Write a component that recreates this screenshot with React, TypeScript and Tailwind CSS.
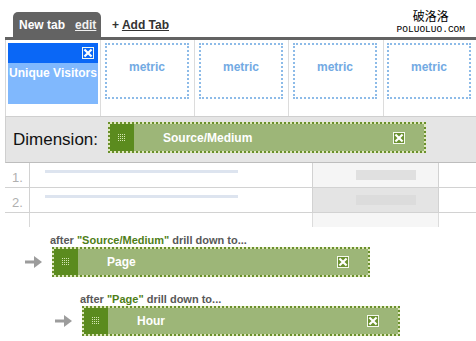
import React from "react";

const SANS = { fontFamily: '"Liberation Sans", Arial, sans-serif' };

function Grip() {
  const cells: React.ReactNode[] = [];
  for (let y = 0; y < 4; y++) {
    for (let x = 0; x < 4; x++) {
      cells.push(<rect key={`${x}-${y}`} x={x * 2} y={y * 2} width="1" height="1" fill="#d6e6b4" />);
    }
  }
  return (
    <svg width="8" height="8" viewBox="0 0 8 8">
      {cells}
    </svg>
  );
}

function XIcon({ fill }: { fill: string }) {
  return (
    <svg width="12" height="12" viewBox="0 0 12 12">
      <rect x="0.5" y="0.5" width="11" height="11" fill={fill} stroke="#f4f8ee" strokeWidth="1" />
      <path d="M3.2 3.2 L8.8 8.8 M8.8 3.2 L3.2 8.8" stroke="#ffffff" strokeWidth="2.2" strokeLinecap="square" />
    </svg>
  );
}

function Arrow() {
  return (
    <svg width="17" height="12" viewBox="0 0 17 12">
      <rect x="0" y="4.5" width="10" height="3" fill="#9c9c9c" />
      <polygon points="9,0 17,6 9,12" fill="#9c9c9c" />
    </svg>
  );
}

function PillBody({ label }: { label: string }) {
  return (
    <div className="h-full border-2 border-dotted border-[#6a902b] bg-clip-padding flex">
      <div className="w-[24px] bg-[#5b8b1e] flex items-center justify-center">
        <Grip />
      </div>
      <div className="flex-1 bg-[#9db678] flex items-center pl-[29px] pr-[19px]">
        <span className="text-white font-bold text-[12px] leading-[14px]">{label}</span>
        <span className="ml-auto flex">
          <XIcon fill="#6b9130" />
        </span>
      </div>
    </div>
  );
}

function MetricBox() {
  return (
    <div className="mt-[3px] w-[84px] h-[56px] border-2 border-dotted border-[#8dbbe8] flex justify-center pt-[15px]">
      <span className="text-[12px] leading-[14px] font-bold text-[#72aae3]">metric</span>
    </div>
  );
}

export default function App() {
  return (
    <div className="w-[476px] h-[341px] bg-white overflow-hidden" style={SANS}>
      {/* header */}
      <div className="flex h-[37px]">
        <div className="ml-[13px] mt-[12px] h-[25px] w-[88px] rounded-t-[5px] bg-[#636363] flex items-center pl-[6px] text-[12px] leading-[14px] font-bold text-white">
          <span>New tab</span>
          <span className="ml-[10px] underline text-[#f0f0f0]">edit</span>
        </div>
        <div className="ml-[11px] mt-[18px] text-[12px] leading-[14px] font-bold text-[#333]">
          + <span className="underline">Add Tab</span>
        </div>
        <div className="ml-auto mr-[11px] mt-[10px] flex flex-col items-center">
          <div
            className="text-[12px] leading-[12px] text-black"
            style={{ fontFamily: '"Noto Sans CJK SC", sans-serif' }}
          >
            破洛洛
          </div>
          <div
            className="mt-[4px] text-[9.5px] leading-[8px] text-black"
            style={{ fontFamily: '"Liberation Mono", monospace' }}
          >
            POLUOLUO.COM
          </div>
        </div>
      </div>
      <div className="ml-[5px] h-[3px] bg-[#636363]" />

      {/* metric row */}
      <div className="ml-[5px] flex h-[76px] border-l border-[#d8d8d8]">
        <div className="w-[95px] border-r border-[#dcdcdc] pl-[2px] pt-[3px]">
          <div className="w-[90px] h-[61px] flex flex-col">
            <div className="h-[20px] bg-[#0a67f6] flex items-center justify-end pr-[4px]">
              <XIcon fill="#0a67f6" />
            </div>
            <div className="flex-1 bg-[#80b8fd] flex justify-center pt-[3px]">
              <span className="text-[12px] leading-[14px] font-bold text-white">Unique Visitors</span>
            </div>
          </div>
        </div>
        <div className="w-[94px] border-r border-[#dcdcdc] pl-[4px]">
          <MetricBox />
        </div>
        <div className="w-[94px] border-r border-[#dcdcdc] pl-[4px]">
          <MetricBox />
        </div>
        <div className="w-[95px] border-r border-[#dcdcdc] pl-[4px]">
          <MetricBox />
        </div>
        <div className="flex-1 pl-[3px]">
          <MetricBox />
        </div>
      </div>

      {/* dimension bar */}
      <div className="ml-[5px] h-[47px] bg-[#e5e5e5] border-t border-b border-l border-t-[#cfcfcf] border-b-[#bdbdbd] border-l-[#cfcfcf] flex">
        <div className="w-[102px] pl-[7px] self-center text-[17px] leading-[20px] text-[#111]">Dimension:</div>
        <div className="mt-[5px] w-[318px] h-[31px] bg-[#dfe8bd]">
          <PillBody label="Source/Medium" />
        </div>
      </div>

      {/* table */}
      <div className="ml-[5px]">
        <div className="flex h-[25px] border-b border-[#d2d2d2]">
          <div className="w-[25px] border-r border-[#d2d2d2] pl-[7px] pt-[8px] text-[13px] leading-[14px] text-[#b0b0b0]">1.</div>
          <div className="w-[282px] pl-[15px] pt-[7px]">
            <div className="w-[193px] h-[3px] bg-[#dde4ef]" />
          </div>
          <div className="w-[127px] border-l border-r border-[#d2d2d2] bg-[#f5f5f5] pl-[43px] pt-[7px]">
            <div className="w-[60px] h-[10px] bg-[#e0e0e0]" />
          </div>
          <div className="flex-1" />
        </div>
        <div className="flex h-[25px] border-b border-[#d2d2d2]">
          <div className="w-[25px] border-r border-[#d2d2d2] pl-[7px] pt-[8px] text-[13px] leading-[14px] text-[#b0b0b0]">2.</div>
          <div className="w-[282px] pl-[15px] pt-[7px]">
            <div className="w-[193px] h-[3px] bg-[#dde4ef]" />
          </div>
          <div className="w-[127px] border-l border-r border-[#d2d2d2] bg-[#e4e4e4] pl-[43px] pt-[7px]">
            <div className="w-[60px] h-[10px] bg-[#dcdcdc]" />
          </div>
          <div className="flex-1" />
        </div>
        <div className="flex h-[14px]">
          <div className="w-[25px] border-r border-[#d8d8d8]" />
          <div className="w-[282px]" />
          <div className="w-[127px] border-l border-r border-[#dcdcdc] bg-[#f6f6f6]" />
          <div className="flex-1" />
        </div>
      </div>

      {/* drill downs */}
      <div className="ml-[50px] mt-[6px] h-[14px] leading-[14px] text-[11px] font-bold text-[#585858]">
        after <span className="text-[#4f7e18]">"Source/Medium"</span> drill down to...
      </div>
      <div className="flex items-center h-[30px]">
        <div className="ml-[25px] flex">
          <Arrow />
        </div>
        <div className="ml-[10px] w-[318px] h-[30px] bg-[#dfe8bd]">
          <PillBody label="Page" />
        </div>
      </div>
      <div className="ml-[80px] mt-[16px] h-[13px] leading-[13px] text-[11px] font-bold text-[#585858]">
        after <span className="text-[#4f7e18]">"Page"</span> drill down to...
      </div>
      <div className="flex items-center h-[30px]">
        <div className="ml-[55px] flex">
          <Arrow />
        </div>
        <div className="ml-[10px] w-[318px] h-[30px] bg-[#dfe8bd]">
          <PillBody label="Hour" />
        </div>
      </div>
    </div>
  );
}
